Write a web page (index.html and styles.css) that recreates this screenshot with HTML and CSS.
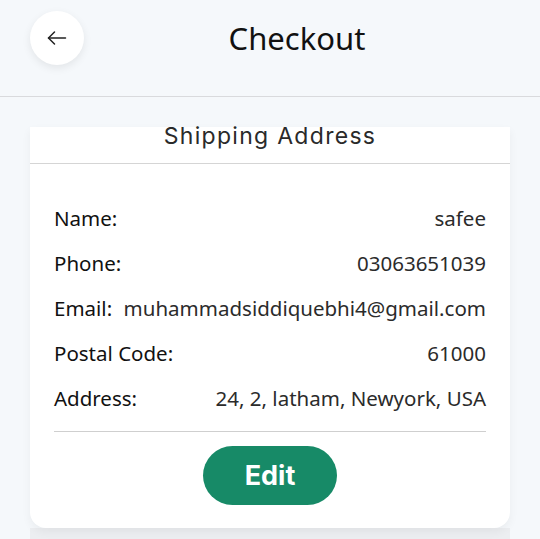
FILE: index.html
```html
<!DOCTYPE html>
<html>

  <head>
    <link rel="stylesheet" href="styles.css">
  </head>

  <body>
    <div class="topbar">
      <button class="back-btn">
        <svg width="24" height="24" viewBox="0 0 24 24" fill="none" stroke="#222" stroke-width="1.5" stroke-linecap="round" stroke-linejoin="round">
          <path d="M20.5 12H3.5"></path>
          <path d="M9.5 6l-6 6 6 6"></path>
        </svg>
      </button>
      <h1>Checkout</h1>
    </div>

    <div class="content">
      <div class="card">
        <h2>Shipping Address</h2>
        <div class="details">
          <div class="row"><span>Name:</span><span>safee</span></div>
          <div class="row"><span>Phone:</span><span>03063651039</span></div>
          <div class="row"><span>Email:</span><span>muhammadsiddiquebhi4@gmail.com</span></div>
          <div class="row"><span>Postal Code:</span><span>61000</span></div>
          <div class="row"><span>Address:</span><span>24, 2, latham, Newyork, USA</span></div>
        </div>
        <div class="actions">
          <button class="edit-btn">Edit</button>
        </div>
      </div>
      <div class="under"></div>
    </div>
  </body>

</html>
```

FILE: styles.css
```css
body {
  margin: 0;
  background-color: #f5f8fb;
  font-family: "Noto Sans", sans-serif;
  color: #1f1f1f;
  height: 539px;
  overflow: hidden;
}

.topbar {
  height: 97px;
  display: flex;
  align-items: center;
  border-bottom: 1px solid #d9dadd;
  position: relative;
  box-sizing: border-box;
  padding-bottom: 20px;
}

.back-btn {
  position: absolute;
  left: 30px;
  top: 11px;
  width: 54px;
  height: 54px;
  border-radius: 50%;
  border: none;
  background: #fff;
  box-shadow: 0 3px 8px rgba(0, 0, 0, 0.08);
  display: flex;
  align-items: center;
  justify-content: center;
  padding: 0;
}

.topbar h1 {
  flex: 1;
  margin: 0;
  text-align: center;
  font-size: 31px;
  font-weight: 400;
  padding-left: 54px;
  color: #111;
}

.content {
  padding: 30px 30px 0;
}

.card {
  background: #fff;
  border-radius: 0 0 16px 16px;
  box-shadow: 0 4px 10px rgba(0, 0, 0, 0.05);
  position: relative;
  z-index: 1;
}

.card h2 {
  margin: 0;
  height: 36px;
  line-height: 19px;
  text-align: center;
  font-family: "Inter", sans-serif;
  font-size: 23px;
  font-weight: 400;
  letter-spacing: 1.3px;
  color: #2a2a2a;
  border-bottom: 1.5px solid #d5d5d5;
}

.details {
  padding: 32px 0 10px;
  border-bottom: 1px solid #cfcfcf;
  margin: 0 24px;
}

.row {
  display: flex;
  justify-content: space-between;
  font-size: 20.5px;
  height: 45px;
  line-height: 45px;
}

.row span:first-child {
  color: #111;
}

.row span:last-child {
  color: #2b2b2b;
}

.actions {
  display: flex;
  justify-content: center;
  padding: 14px 0 23px;
}

.edit-btn {
  width: 134px;
  height: 59px;
  border-radius: 30px;
  border: none;
  background-color: #178a67;
  color: #fff;
  font-family: "Inter", sans-serif;
  font-weight: 700;
  font-size: 27px;
}

.under {
  height: 20px;
  background-color: #eceef1;
}
```
